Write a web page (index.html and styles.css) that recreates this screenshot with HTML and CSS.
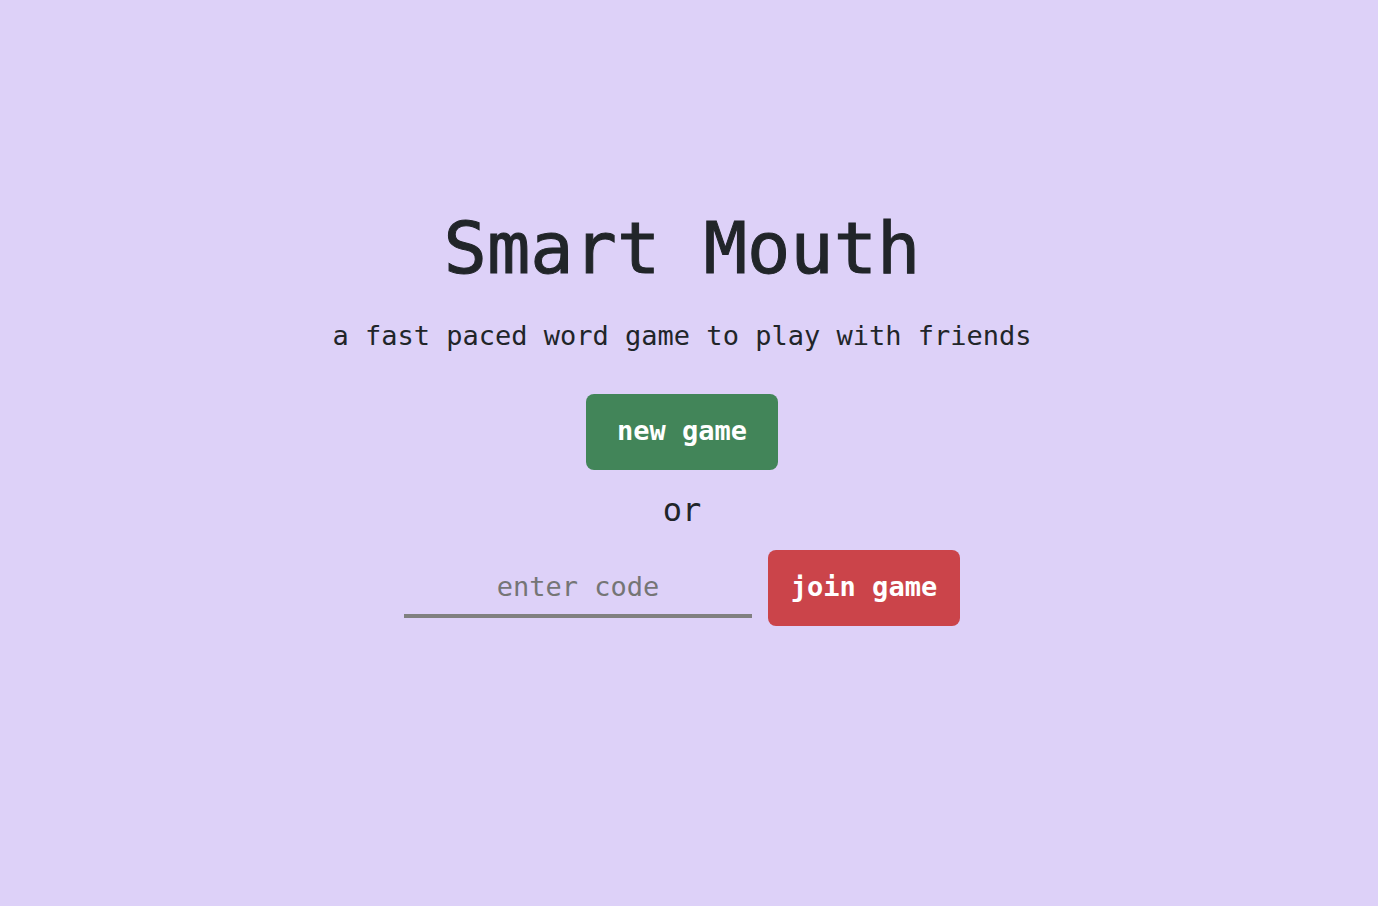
FILE: index.html
```html
<!DOCTYPE html>
<html lang="en">
<head>
  <meta charset="utf-8">
  <meta name="viewport" content="width=device-width, initial-scale=1">
  <title>Smart Mouth</title>
  <link rel="stylesheet" href="styles.css">
</head>
<body>
  <main class="home">
    <h1 class="title">Smart Mouth</h1>
    <p class="tagline">a fast paced word game to play with friends</p>
    <button class="button button-new" type="button">new game</button>
    <p class="divider">or</p>
    <form class="join">
      <input class="code" type="text" placeholder="enter code" aria-label="enter code">
      <button class="button button-join" type="button">join game</button>
    </form>
  </main>
</body>
</html>
```
FILE: styles.css
```css
* {
  box-sizing: border-box;
}

body {
  margin: 0;
  min-height: 100vh;
  background: #ddd1f8;
  color: #212529;
  font-family: "DejaVu Sans Mono", monospace;
}

.home {
  display: flex;
  flex-direction: column;
  align-items: center;
  padding: 200px 14px 40px 0;
  text-align: center;
}

.title {
  margin: 0 0 20px;
  font-size: 72px;
  font-weight: 400;
  line-height: 96px;
  -webkit-text-stroke: 1px currentColor;
}

.tagline {
  margin: 0 0 38px;
  font-size: 27px;
  line-height: 40px;
}

.button {
  min-width: 192px;
  height: 76px;
  padding: 0 16px 4px;
  border: 0;
  border-radius: 8px;
  color: #fff;
  font-family: inherit;
  font-size: 27px;
  font-weight: 700;
  cursor: pointer;
}

.button-new {
  background: #428559;
}

.button-join {
  background: #cb444a;
}

.divider {
  margin: 20px 0;
  font-size: 32px;
  line-height: 40px;
}

.join {
  display: flex;
  flex-wrap: wrap;
  align-items: center;
  justify-content: center;
  gap: 16px;
}

.code {
  width: 348px;
  max-width: 100%;
  height: 60px;
  padding: 0;
  border: 0;
  border-bottom: 4px solid #808080;
  border-radius: 0;
  background: transparent;
  color: #212529;
  font-family: inherit;
  font-size: 27px;
  text-align: center;
}

.code::placeholder {
  color: #757575;
  opacity: 1;
}
```
